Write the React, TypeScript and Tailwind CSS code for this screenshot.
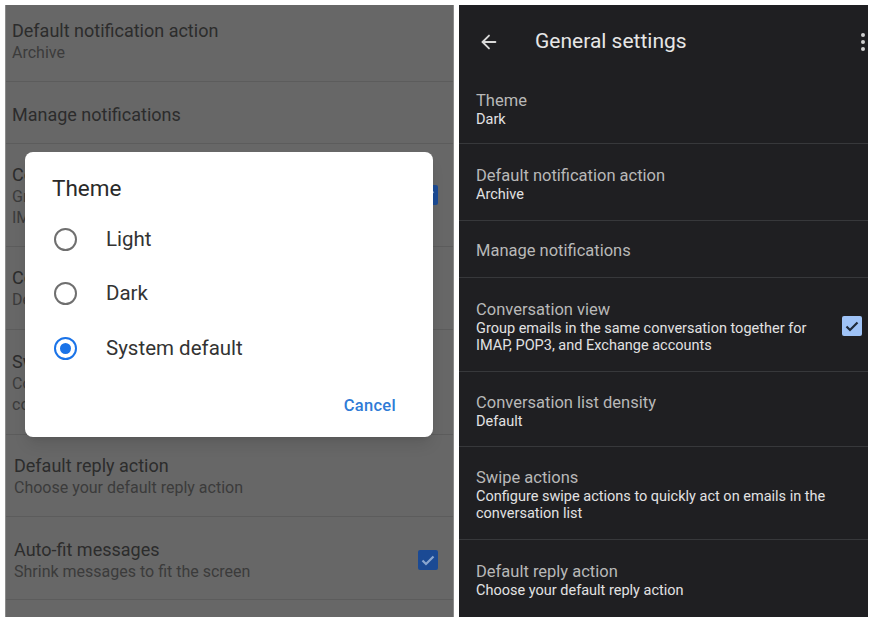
import { ArrowLeft } from 'lucide-react'

type Item = { title: string; sub?: string[]; h: number; checked?: boolean; pad?: string }

const leftItems: Item[] = [
  { title: 'Default notification action', sub: ['Archive'], h: 77, pad: 'pb-[4px]' },
  { title: 'Manage notifications', h: 62, pad: 'pt-[3px]' },
  {
    title: 'Conversation view',
    sub: ['Group emails in the same conversation together for', 'IMAP, POP3, and Exchange accounts'],
    h: 103,
    checked: true,
  },
  { title: 'Conversation list density', sub: ['Default'], h: 83 },
  {
    title: 'Swipe actions',
    sub: ['Configure swipe actions to quickly act on emails in the', 'conversation list'],
    h: 105,
  },
  { title: 'Default reply action', sub: ['Choose your default reply action'], h: 82, pad: 'pl-[8px]' },
  { title: 'Auto-fit messages', sub: ['Shrink messages to fit the screen'], h: 83, checked: true, pad: 'pt-[3px] pl-[8px]' },
]

const rightItems: Item[] = [
  { title: 'Theme', sub: ['Dark'], h: 67, pad: 'pb-[2px]' },
  { title: 'Default notification action', sub: ['Archive'], h: 77, pad: 'pt-[4px]' },
  { title: 'Manage notifications', h: 57, pad: 'pt-[3px]' },
  {
    title: 'Conversation view',
    sub: ['Group emails in the same conversation together for', 'IMAP, POP3, and Exchange accounts'],
    h: 94,
    checked: true,
    pad: 'pt-[3px]',
  },
  { title: 'Conversation list density', sub: ['Default'], h: 75, pad: 'pt-[3px]' },
  {
    title: 'Swipe actions',
    sub: ['Configure swipe actions to quickly act on emails in the', 'conversation list'],
    h: 93,
    pad: 'pt-[3px]',
  },
  { title: 'Default reply action', sub: ['Choose your default reply action'], h: 77, pad: 'pt-[2px]' },
]

const CheckIcon = ({ color }: { color: string }) => (
  <svg viewBox="0 0 20 20" className="w-full h-full">
    <path d="M4.5 10.5l3.5 3.5 7.5-7.5" fill="none" stroke={color} strokeWidth="2.2" />
  </svg>
)

const Radio = ({ on }: { on?: boolean }) =>
  on ? (
    <div className="w-[23px] h-[23px] rounded-full border-[2.5px] border-[#1a73e8] flex items-center justify-center">
      <div className="w-[11px] h-[11px] rounded-full bg-[#1a73e8]" />
    </div>
  ) : (
    <div className="w-[23px] h-[23px] rounded-full border-2 border-[#6f6f6f]" />
  )

const App = () => {
  return (
    <div
      className="w-[875px] h-[624px] bg-white flex gap-[5px] pl-[5px] pt-[5px]"
      style={{ fontFamily: 'Roboto, "Noto Sans", sans-serif' }}
    >
      {/* left: light settings dimmed under the theme dialog */}
      <div className="relative w-[449px] h-[612px] bg-[#676767] overflow-hidden border-x border-[#8a8a8a]">
        {leftItems.map((item, i) => (
          <div
            key={i}
            style={{ height: item.h }}
            className={`flex items-center justify-between border-b border-[#5c5c5c] pl-[6px] pr-[15px] ${item.pad ?? ''}`}
          >
            <div>
              <div className="text-[18px] leading-[23px] text-[#2c2c2c]">{item.title}</div>
              {item.sub?.map((s) => (
                <div key={s} className="text-[16px] leading-[21px] text-[#3b3b3b]">
                  {s}
                </div>
              ))}
            </div>
            {item.checked && (
              <div className="w-[20px] h-[20px] rounded-[2px] bg-[#1b4a94] shrink-0">
                <CheckIcon color="#8aa6cf" />
              </div>
            )}
          </div>
        ))}

        <div className="absolute left-[19px] top-[147px] w-[408px] h-[285px] bg-white rounded-[8px] shadow-lg">
          <div className="pl-[27px] pt-[22px] text-[22.5px] leading-[28px] text-[#2a2a2a]">Theme</div>
          <div className="mt-[10px]">
            {['Light', 'Dark', 'System default'].map((t) => (
              <div key={t} className="flex items-center h-[54.5px] pl-[29px]">
                <Radio on={t === 'System default'} />
                <span className="ml-[29px] text-[20.5px] text-[#333]">{t}</span>
              </div>
            ))}
          </div>
          <div className="flex justify-end pr-[37px] mt-[18px]">
            <span className="text-[16.5px] font-medium text-[#2f7bd6] tracking-[0.3px]">Cancel</span>
          </div>
        </div>
      </div>

      {/* right: dark general settings */}
      <div className="w-[409px] h-[612px] bg-[#1f1f22] overflow-hidden">
        <div className="h-[72px] flex items-center pt-[2px]">
          <ArrowLeft className="ml-[19px] text-[#d9d9d9]" size={22} strokeWidth={2} />
          <span className="ml-[35px] text-[21px] text-[#e6e6e6]">General settings</span>
          <div className="ml-auto mr-[3px] flex flex-col gap-[3px]">
            <div className="w-[4px] h-[4px] rounded-full bg-[#cfcfcf]" />
            <div className="w-[4px] h-[4px] rounded-full bg-[#cfcfcf]" />
            <div className="w-[4px] h-[4px] rounded-full bg-[#cfcfcf]" />
          </div>
        </div>
        {rightItems.map((item, i) => (
          <div
            key={i}
            style={{ height: item.h }}
            className={`flex items-center justify-between pl-[17px] pr-[6px] ${item.pad ?? ''} ${
              i < rightItems.length - 1 ? 'border-b border-[#37383b]' : ''
            }`}
          >
            <div>
              <div className="text-[16.5px] leading-[21px] text-[#b8b8b8]">{item.title}</div>
              {item.sub?.map((s) => (
                <div key={s} className="text-[14.5px] leading-[17px] text-[#e2e2e2]">
                  {s}
                </div>
              ))}
            </div>
            {item.checked && (
              <div className="w-[20px] h-[20px] rounded-[2px] bg-[#9fc3f7] shrink-0">
                <CheckIcon color="#1f2a3a" />
              </div>
            )}
          </div>
        ))}
      </div>
    </div>
  )
}

export default App
